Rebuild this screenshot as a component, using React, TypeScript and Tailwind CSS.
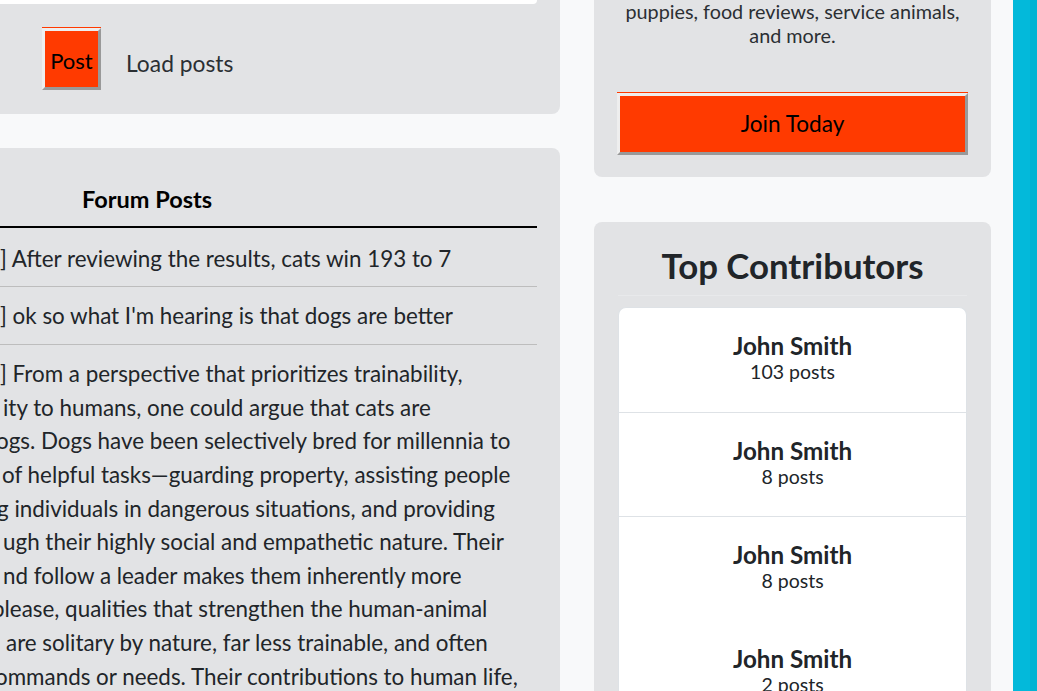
export default function App() {
  const contributors = [
    { name: "John Smith", posts: "103 posts" },
    { name: "John Smith", posts: "8 posts" },
    { name: "John Smith", posts: "8 posts" },
    { name: "John Smith", posts: "2 posts" },
  ];

  return (
    <div className="flex h-[691px] w-[1037px] overflow-hidden bg-[#f8f9fa] font-['Lato',sans-serif] text-[#212529]">
      {/* left column */}
      <div className="flex w-[560px] shrink-0 flex-col gap-[34px]">
        <div className="h-[114px] shrink-0 rounded-br-lg bg-[#e2e3e5] pr-[23px]">
          <div className="h-[4px] w-full rounded-br-md bg-white" />
          <div className="mt-[24px] flex items-center">
            <button className="ml-[42px] flex h-[62px] w-[59px] items-center justify-center border-[3px] border-t-[#eeeeee] border-l-[#eeeeee] border-r-[#999999] border-b-[#999999] bg-[#ff3a00] pt-[2px] text-[22px] text-black shadow-[0_-1px_0_#ff3a00]">
              Post
            </button>
            <span className="ml-[25px] mt-[8px] text-[22.8px] text-[#2b2f33]">Load posts</span>
          </div>
        </div>

        <div className="flex-1 rounded-tr-lg bg-[#e2e3e5] pr-[23px]">
          <div className="flex h-[80px] items-center border-b-2 border-black pl-[82px] pt-[30px] pb-[4px]">
            <span className="text-[23.5px] font-bold text-black">Forum Posts</span>
          </div>
          <div className="border-b border-[#bdbdbd] pt-[14px] pb-[10px] text-[22.4px] leading-[33.6px] whitespace-nowrap">
            ] After reviewing the results, cats win 193 to 7
          </div>
          <div className="border-b border-[#bdbdbd] py-[12px] text-[22.4px] leading-[33.6px] whitespace-nowrap">
            ] ok so what I'm hearing is that dogs are better
          </div>
          <div className="py-[12px] text-[22.4px] leading-[33.6px] whitespace-nowrap">
            <div>] From a perspective that prioritizes trainability,</div>
            <div className="pl-[3px]">ity to humans, one could argue that cats are</div>
            <div className="relative -left-[4px]">ogs. Dogs have been selectively bred for millennia to</div>
            <div className="pl-[2px]">of helpful tasks{"\u2014"}guarding property, assisting people</div>
            <div className="relative -left-[3px]">g individuals in dangerous situations, and providing</div>
            <div className="pl-[3px]">ugh their highly social and empathetic nature. Their</div>
            <div className="pl-[3px]">nd follow a leader makes them inherently more</div>
            <div className="relative -left-[8px]">please, qualities that strengthen the human-animal</div>
            <div className="pl-[6px]">are solitary by nature, far less trainable, and often</div>
            <div className="relative -left-[5px]">ommands or needs. Their contributions to human life,</div>
          </div>
        </div>
      </div>

      {/* right column */}
      <div className="ml-[34px] flex w-[397px] shrink-0 flex-col gap-[45px]">
        <div className="h-[177px] shrink-0 rounded-b-lg bg-[#e2e3e5] px-[23px]">
          <p className="-mt-px text-center text-[19.8px] leading-[24px] text-[#2b2f33]">
            puppies, food reviews, service animals,
            <br />
            and more.
          </p>
          <button className="mt-[46px] flex h-[62px] w-[351px] items-center justify-center border-[3px] border-t-[#eeeeee] border-l-[#eeeeee] border-r-[#999999] border-b-[#999999] bg-[#ff3a00] text-[22.6px] text-black shadow-[0_-1px_0_#ff3a00]">
            Join Today
          </button>
        </div>

        <div className="flex-1 rounded-t-lg bg-[#e2e3e5] px-[24px] pt-[22px]">
          <h2 className="text-center text-[34.8px] font-bold leading-[44px] text-[#212529]">Top Contributors</h2>
          <div className="mt-[7px] h-px bg-[#e8e9eb]" />
          <div className="mt-[11px] overflow-hidden rounded-t-lg border border-b-0 border-[#dee2e6] bg-white">
            {contributors.map((c, i) => (
              <div
                key={i}
                className={`flex h-[104px] flex-col items-center justify-center pb-[4px] ${i === 0 ? "" : i === 3 ? "border-t border-white" : "border-t border-[#dee2e6]"}`}
              >
                <span className="text-[24.2px] font-bold leading-[27px]">{c.name}</span>
                <span className="text-[19.5px] leading-[25px]">{c.posts}</span>
              </div>
            ))}
          </div>
        </div>
      </div>

      <div className="ml-[22px] flex w-[24px] shrink-0">
        <div className="w-[17px] bg-[#03b9da]" />
        <div className="flex-1 bg-[#02b3d3]" />
      </div>
    </div>
  );
}
